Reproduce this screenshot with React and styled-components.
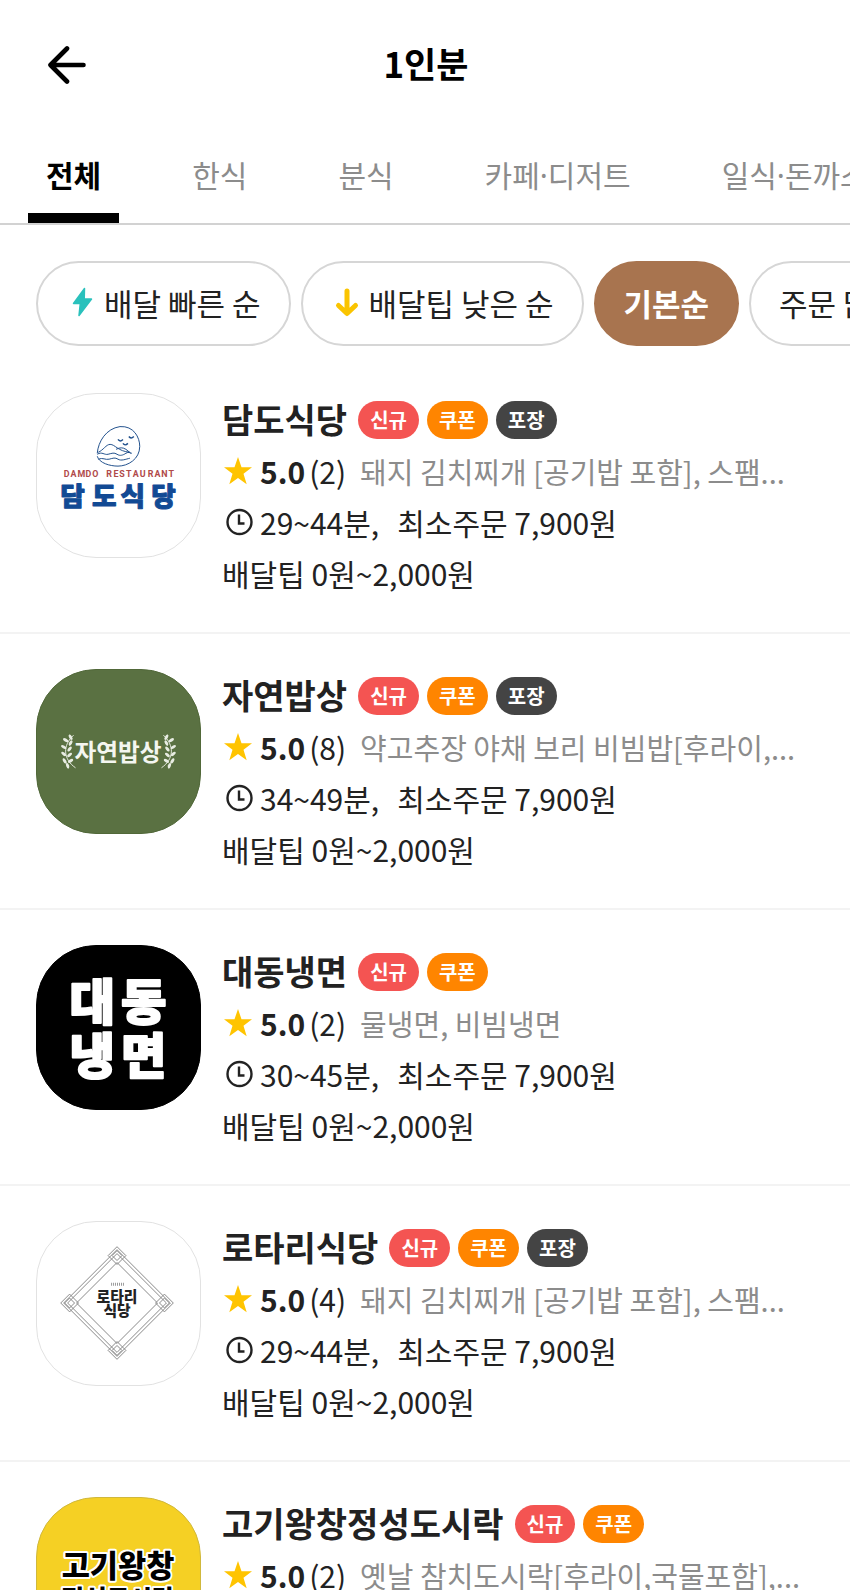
import React, { useState } from "react";
import styled, { createGlobalStyle } from "styled-components";

const TABS = ["전체", "한식", "분식", "카페·디저트", "일식·돈까스"];

const SORTS = [
  { name: "배달 빠른 순", icon: "bolt" },
  { name: "배달팁 낮은 순", icon: "down" },
  { name: "기본순" },
  { name: "주문 많은 순" }
];

const TAG_COLORS = {
  신규: "#f45452",
  쿠폰: "#ff8500",
  포장: "#444444"
};

const STORES = [
  {
    id: 1,
    logo: "damdo",
    name: "담도식당",
    tags: ["신규", "쿠폰", "포장"],
    rate: "5.0",
    review: 2,
    menu: "돼지 김치찌개 [공기밥 포함], 스팸...",
    time: "29~44분",
    min: 7900
  },
  {
    id: 2,
    logo: "jayeon",
    name: "자연밥상",
    tags: ["신규", "쿠폰", "포장"],
    rate: "5.0",
    review: 8,
    menu: "약고추장 야채 보리 비빔밥[후라이,...",
    time: "34~49분",
    min: 7900
  },
  {
    id: 3,
    logo: "daedong",
    name: "대동냉면",
    tags: ["신규", "쿠폰"],
    rate: "5.0",
    review: 2,
    menu: "물냉면, 비빔냉면",
    time: "30~45분",
    min: 7900
  },
  {
    id: 4,
    logo: "rotary",
    name: "로타리식당",
    tags: ["신규", "쿠폰", "포장"],
    rate: "5.0",
    review: 4,
    menu: "돼지 김치찌개 [공기밥 포함], 스팸...",
    time: "29~44분",
    min: 7900
  },
  {
    id: 5,
    logo: "gogi",
    name: "고기왕창정성도시락",
    tags: ["신규", "쿠폰"],
    rate: "5.0",
    review: 2,
    menu: "옛날 참치도시락[후라이,국물포함],...",
    time: "29~44분",
    min: 7900
  }
];

const BackIcon = () => (
  <svg width="38" height="38" viewBox="0 0 38 38" fill="none">
    <path
      d="M19 2.5 2.5 19 19 35.5M3 19h32.500"
      stroke="#000"
      strokeWidth="4.600"
      strokeLinecap="round"
      strokeLinejoin="round"
    />
  </svg>
);

const BoltIcon = () => (
  <svg width="32" height="32" viewBox="0 0 32 32">
    <path
      d="M18.500 2.500 7.500 17.500h6.800L13 29.500 25.500 13h-7.300z"
      fill="#2ac1bc"
      stroke="#2ac1bc"
      strokeWidth="1.500"
      strokeLinejoin="round"
    />
  </svg>
);

const DownIcon = () => (
  <svg width="32" height="32" viewBox="0 0 32 32" fill="none">
    <path
      d="M16 5v22M7.500 19.500 16 27.500l8.500-8"
      stroke="#fac400"
      strokeWidth="5"
      strokeLinecap="round"
      strokeLinejoin="round"
    />
  </svg>
);

const StarIcon = () => (
  <svg width="32" height="32" viewBox="0 0 32 32">
    <path
      d="M16 2l3.500 10.200H30l-8.500 6.500 3.200 10.500L16 23l-8.700 6.200 3.200-10.500L2 12.200h10.500z"
      fill="#ffc400"
    />
  </svg>
);

const ClockIcon = () => (
  <svg width="32" height="32" viewBox="0 0 32 32" fill="none" stroke="#222">
    <circle cx="17.500" cy="16" r="12" strokeWidth="2.400" />
    <path d="M17 8.500V17.500H22.500" strokeWidth="2.400" />
  </svg>
);

const DamdoLogo = () => (
  <svg viewBox="0 0 165 165" width="100%" height="100%">
    <g fill="none" stroke="#1f4f8b" strokeWidth="1">
      <path d="M61 60C62 48 70 35 84 33c14-1 20 11 20 20 0 13-12 20-22 20-8 0-19-3-21-10" />
      <path d="M62 59c5-2 8-8 12-8 5 0 8 7 20 8M80 56c4-2 7-2 10 0l5 4" />
      <path d="M61 61c5-3 7 1 11 0s6-2 9 0 6 1 9-1 4 0 6 0M62 66c5-2 7 1 11 0s6-2 9 0 8 0 12-1" />
    </g>
    <path
      d="M82 46q2 3 5 0M93 43q2 3 5 0M87 50q2 3 5 0"
      fill="none"
      stroke="#1f4f8b"
      strokeWidth="1.500"
    />
    <EnglishText x="30 37 45 52 59 73 80 86 93 100 107 115 122 129 136" y="84">
      DAMDORESTAURANT
    </EnglishText>
    <DamdoText x="36 68 97 128" y="113">
      담도식당
    </DamdoText>
  </svg>
);

const LEAVES = [
  [34, 68, 30],
  [29, 71, 60],
  [34, 74, -30],
  [27, 78, 60],
  [33, 80, -40],
  [27, 85, 50],
  [33, 86, -50],
  [28, 92, 30],
  [34, 92, -60],
  [31, 97, 20]
];

const Wreath = () => (
  <g fill="#e8ece2">
    <path
      d="M37 66C26 76 26 90 39 99"
      fill="none"
      stroke="#e8ece2"
      strokeWidth="1"
    />
    {LEAVES.map(([x, y, deg]) => (
      <ellipse
        key={`${x}-${y}`}
        cx={x}
        cy={y}
        rx="1.500"
        ry="3"
        transform={`rotate(${-deg} ${x} ${y})`}
      />
    ))}
  </g>
);

const JayeonLogo = () => (
  <svg viewBox="0 0 165 165" width="100%" height="100%">
    <Wreath />
    <g transform="translate(165 0) scale(-1 1)">
      <Wreath />
    </g>
    <JayeonText x="82" y="92">
      자연밥상
    </JayeonText>
  </svg>
);

const DaedongLogo = () => (
  <svg viewBox="0 0 165 165" width="100%" height="100%">
    <DaedongText x="56 108" y="75">
      대동
    </DaedongText>
    <DaedongText x="56 108" y="130">
      냉면
    </DaedongText>
  </svg>
);

const Knot = ({ x, y }) => (
  <g transform={`translate(${x} ${y})`}>
    <path d="M0-9 9 0 0 9-9 0z" />
    <path d="M0-5 5 0 0 5-5 0z" />
  </g>
);

const RotaryLogo = () => (
  <svg viewBox="0 0 165 165" width="100%" height="100%">
    <g fill="none" stroke="#888" strokeWidth="1">
      <path d="M81 41 122 82 81 123 40 82z" />
      <path d="M81 32 131 82 81 132 31 82z" />
      <path d="M81 28 135 82 81 136 27 82z" />
      <Knot x={81} y={34} />
      <Knot x={129} y={82} />
      <Knot x={81} y={130} />
      <Knot x={33} y={82} />
    </g>
    <path d="M75 63h13" stroke="#999" strokeWidth="3" strokeDasharray="1 1" />
    <RotaryText x="81" y="81">
      로타리
    </RotaryText>
    <RotaryText x="81" y="95">
      식당
    </RotaryText>
  </svg>
);

const GogiLogo = () => (
  <svg viewBox="0 0 165 165" width="100%" height="100%">
    <GogiText x="82" y="80" $size={31}>
      고기왕창
    </GogiText>
    <GogiText x="82" y="111" $size={25}>
      정성도시락
    </GogiText>
  </svg>
);

const LOGOS = {
  damdo: { art: DamdoLogo, back: "#fff", line: "#e2e2e2" },
  jayeon: { art: JayeonLogo, back: "#5a7142", line: "#516839" },
  daedong: { art: DaedongLogo, back: "#000", line: "#000" },
  rotary: { art: RotaryLogo, back: "#fff", line: "#e2e2e2" },
  gogi: { art: GogiLogo, back: "#f5d024", line: "#d0b83c" }
};

const Store = ({ store }) => {
  const { art: Art, back, line } = LOGOS[store.logo];

  return (
    <StoreItem>
      <Thumb $back={back} $line={line}>
        <Art />
      </Thumb>
      <StoreInfo>
        <NameRow>
          <StoreName>{store.name}</StoreName>
          <Tags>
            {store.tags.map(tag => (
              <Tag key={tag} $color={TAG_COLORS[tag]}>
                {tag}
              </Tag>
            ))}
          </Tags>
        </NameRow>
        <InfoRow>
          <StarIcon />
          <Rate>{store.rate}</Rate>
          <Review>({store.review})</Review>
          <Menu>{store.menu}</Menu>
        </InfoRow>
        <InfoRow>
          <ClockIcon />
          <Time>{store.time},</Time>
          <span>최소주문 {store.min.toLocaleString()}원</span>
        </InfoRow>
        <InfoRow>배달팁 0원~2,000원</InfoRow>
      </StoreInfo>
    </StoreItem>
  );
};

const App = () => {
  const [tab, setTab] = useState("전체");
  const [sort, setSort] = useState("기본순");

  return (
    <>
      <GlobalStyle />
      <Header>
        <BackButton type="button" aria-label="뒤로">
          <BackIcon />
        </BackButton>
        <Title>1인분</Title>
      </Header>
      <TabBar>
        {TABS.map(name => (
          <Tab
            key={name}
            type="button"
            $active={name === tab}
            onClick={() => setTab(name)}
          >
            {name}
          </Tab>
        ))}
      </TabBar>
      <SortBar>
        {SORTS.map(({ name, icon }) => (
          <SortButton
            key={name}
            type="button"
            $active={name === sort}
            onClick={() => setSort(name)}
          >
            {icon === "bolt" && <BoltIcon />}
            {icon === "down" && <DownIcon />}
            {name}
          </SortButton>
        ))}
      </SortBar>
      <StoreList>
        {STORES.map(store => (
          <Store key={store.id} store={store} />
        ))}
      </StoreList>
    </>
  );
};
export default App;

const GlobalStyle = createGlobalStyle`
  * {
    box-sizing: border-box;
  }
  body {
    margin: 0;
    overflow-x: hidden;
    background: #fff;
    color: #222;
    font-family: "Noto Sans CJK KR", sans-serif;
  }
  button {
    margin: 0;
    border: 0;
    background: none;
    font-family: inherit;
    cursor: pointer;
  }
  svg {
    display: block;
    flex-shrink: 0;
  }
`;

const Header = styled.header`
  display: grid;
  grid-template-columns: 40px 1fr 40px;
  align-items: center;
  height: 130px;
  padding: 0 46px 0 48px;
`;
const BackButton = styled.button`
  padding: 0;
`;
const Title = styled.h1`
  margin: 0;
  padding-bottom: 4px;
  color: #000;
  font-size: 35px;
  font-weight: 700;
  line-height: 50px;
  text-align: center;
`;

const TabBar = styled.nav`
  display: flex;
  gap: 55px;
  height: 95px;
  padding: 0 28px;
  border-bottom: 2px solid #d2d2d2;
  overflow: hidden;
`;
const Tab = styled.button`
  flex-shrink: 0;
  padding: 0 18px;
  border-top: 4px solid transparent;
  border-bottom: 10px solid ${props => (props.$active ? "#000" : "transparent")};
  color: ${props => (props.$active ? "#000" : "#8c8c8c")};
  font-family: "Noto Sans", "Noto Sans CJK KR", sans-serif;
  font-size: 30px;
  font-weight: ${props => (props.$active ? 700 : 400)};
  white-space: nowrap;
`;

const SortBar = styled.div`
  display: flex;
  gap: 10px;
  padding: 36px 36px 12px;
  overflow: hidden;
`;
const SortButton = styled.button`
  display: flex;
  flex-shrink: 0;
  align-items: center;
  gap: 6px;
  height: 85px;
  padding: 0 28px 3px;
  border: 2px solid ${props => (props.$active ? "#a8744f" : "#d6d6d6")};
  border-radius: 43px;
  background: ${props => (props.$active ? "#a8744f" : "#fff")};
  color: ${props => (props.$active ? "#fff" : "#222")};
  font-size: 31px;
  font-weight: ${props => (props.$active ? 700 : 400)};
  white-space: nowrap;
`;

const StoreList = styled.ul`
  margin: 0;
  padding: 0;
  list-style: none;
`;
const StoreItem = styled.li`
  display: flex;
  gap: 21px;
  height: 276px;
  padding: 35px 36px 0;
  border-bottom: 2px solid #f3f3f3;
`;
const Thumb = styled.div`
  flex-shrink: 0;
  width: 165px;
  height: 165px;
  border: 1px solid ${props => props.$line};
  border-radius: 60px;
  background: ${props => props.$back};
  overflow: hidden;
`;
const StoreInfo = styled.div`
  flex: 1;
  min-width: 0;
`;
const NameRow = styled.div`
  display: flex;
  align-items: center;
  gap: 11px;
  height: 54px;
`;
const StoreName = styled.h2`
  margin: 0;
  padding-bottom: 2px;
  font-size: 34px;
  font-weight: 700;
  line-height: 50px;
  white-space: nowrap;
`;
const Tags = styled.div`
  display: flex;
  gap: 8px;
`;
const Tag = styled.span`
  padding: 0 12px;
  border-radius: 20px;
  background: ${props => props.$color};
  color: #fff;
  font-size: 20px;
  font-weight: 700;
  line-height: 38px;
`;
const InfoRow = styled.div`
  display: flex;
  align-items: center;
  height: 51px;
  padding-bottom: 4px;
  font-size: 30px;
  line-height: 46px;
  white-space: nowrap;
`;
const Rate = styled.strong`
  margin: 0 4px 0 6px;
  font-weight: 700;
`;
const Review = styled.span`
  margin-right: 14px;
`;
const Menu = styled.span`
  min-width: 0;
  overflow: hidden;
  color: #8c8c8c;
  font-size: 29px;
`;
const Time = styled.span`
  margin: 0 18px 0 6px;
`;

const EnglishText = styled.text`
  fill: #b04a4a;
  font-family: Roboto, sans-serif;
  font-size: 9px;
  font-weight: 700;
  text-anchor: middle;
`;
const DamdoText = styled.text`
  fill: #124a94;
  stroke: #124a94;
  stroke-width: 1px;
  stroke-linejoin: round;
  font-size: 27px;
  font-weight: 900;
  text-anchor: middle;
`;
const JayeonText = styled.text`
  fill: #f4f6f0;
  font-size: 24px;
  font-weight: 700;
  text-anchor: middle;
`;
const DaedongText = styled.text`
  fill: #fff;
  stroke: #fff;
  stroke-width: 2px;
  stroke-linejoin: round;
  font-size: 50px;
  font-weight: 900;
  text-anchor: middle;
`;
const RotaryText = styled.text`
  fill: #222;
  font-size: 15px;
  font-weight: 900;
  text-anchor: middle;
`;
const GogiText = styled.text`
  fill: #000;
  stroke: #fff;
  stroke-width: 4px;
  stroke-linejoin: round;
  paint-order: stroke;
  font-size: ${props => props.$size}px;
  font-weight: 900;
  text-anchor: middle;
`;
